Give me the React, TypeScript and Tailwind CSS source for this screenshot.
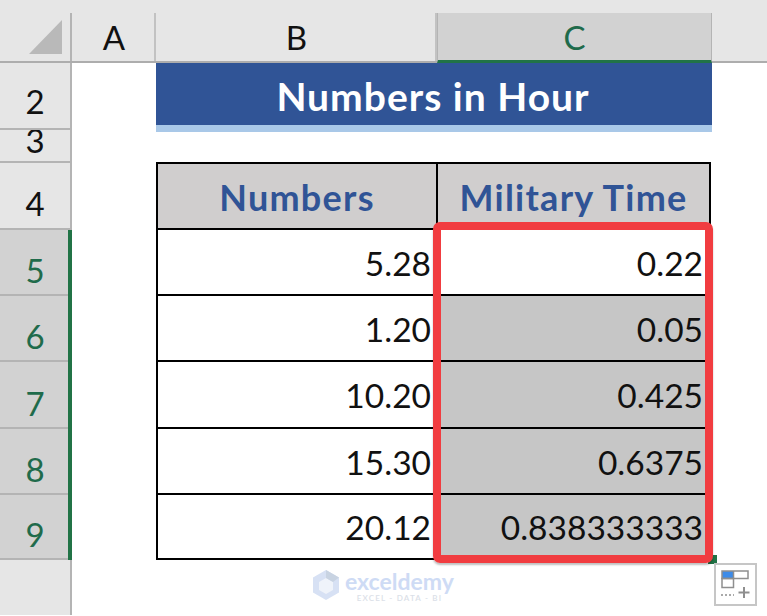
const rows = [
  { n: "5", h: "h-[66px]", cell: "h-[66px]", a: "5.28", b: "0.22", white: true },
  { n: "6", h: "h-[66px]", cell: "h-[66px]", a: "1.20", b: "0.05" },
  { n: "7", h: "h-[67px]", cell: "h-[67px]", a: "10.20", b: "0.425" },
  { n: "8", h: "h-[66px]", cell: "h-[66px]", a: "15.30", b: "0.6375" },
  { n: "9", h: "h-[65px]", cell: "h-[65px]", a: "20.12", b: "0.838333333" },
];

function RowHead({ n, h, pb, active }: { n: string; h: string; pb: string; active?: boolean }) {
  return (
    <div
      className={`${h} ${pb} flex items-end justify-center text-[33px] leading-[40px] border-b-[2px] border-[#b4b4b4] ${
        active ? "bg-[#d2d2d2] text-[#1f6b4b] pl-[2px]" : "bg-[#e6e6e6] text-[#111]"
      }`}
    >
      {n}
    </div>
  );
}

export default function App() {
  return (
    <div className="relative w-[767px] h-[616px] overflow-hidden bg-white font-['Lato','Open_Sans','Liberation_Sans',sans-serif]">
      <div className="h-[13px] bg-[#e6e6e6]" />
      <div className="flex h-[50px] bg-[#e6e6e6] border-b-[2px] border-[#adadad]">
        <div className="w-[72px] shrink-0 border-r-[2px] border-[#b4b4b4] flex items-end justify-end pr-[7px] pb-[7px]">
          <svg width="34" height="34" viewBox="0 0 34 34">
            <path d="M33 0V34H0Z" fill="#b9b9b9" />
          </svg>
        </div>
        <div className="w-[84px] shrink-0 border-r-[2px] border-[#c2c2c2] flex items-center justify-center pl-[2px] text-[33px] text-[#111] leading-[48px]">
          A
        </div>
        <div className="w-[281px] shrink-0 border-r-[2px] border-[#c2c2c2] flex items-center justify-center pl-[2px] text-[33px] text-[#111] leading-[48px]">
          B
        </div>
        <div className="w-[275px] -mb-[2px] shrink-0 bg-[#d2d2d2] border-x border-x-[#b4b4b4] border-b-[3px] border-b-[#217346] flex items-center justify-center text-[33px] text-[#1f6b4b] leading-[48px]">
          C
        </div>
      </div>
      <div className="flex">
        <div className="flex flex-col w-[72px] shrink-0">
          <div className="border-r-[2px] border-[#b4b4b4]">
            <RowHead n="2" h="h-[67px]" pb="pb-[7px]" />
            <div className="h-[33px] pb-[4px] bg-[#e6e6e6] border-b-[2px] border-[#b4b4b4] overflow-hidden flex items-end justify-center text-[33px] leading-[34px] text-[#111]">
              3
            </div>
            <RowHead n="4" h="h-[67px]" pb="pb-[5px]" />
          </div>
          <div className="border-r-[4px] border-[#217346]">
            {rows.map((r) => (
              <RowHead key={r.n} n={r.n} h={r.h} pb="pb-[4px]" active />
            ))}
          </div>
          <div className="h-[55px] bg-[#e6e6e6] border-r-[2px] border-[#b4b4b4]" />
        </div>
        <div className="ml-[84px] w-[556px]">
          <div className="flex flex-col">
            <div className="h-[62px] pr-[2px] bg-[#305496] text-white text-center font-bold text-[39px] tracking-[1px] leading-[66px]">
              Numbers in Hour
            </div>
            <div className="h-[7px] bg-[#a9c8e8]" />
          </div>
          <div className="h-[30px]" />
          <div className="w-[555px] border-[2px] border-black text-[#111] text-[33.500px]">
            <div className="flex h-[64px] bg-[#d0cece] text-[#305496] font-bold text-[36px] tracking-[1.250px]">
              <div className="w-[280px] border-r-[2px] border-black flex items-center justify-center pt-[2px]">Numbers</div>
              <div className="flex-1 flex items-center justify-center pt-[2px]">Military Time</div>
            </div>
            {rows.map((r) => (
              <div key={r.n} className={`flex ${r.cell} border-t-[2px] border-black`}>
                <div className="w-[280px] border-r-[2px] border-black flex items-center justify-end pr-[5px] pt-[2px]">{r.a}</div>
                <div className={`flex-1 flex items-center justify-end pr-[6px] pt-[2px] ${r.white ? "bg-white" : "bg-[#c6c6c6]"}`}>{r.b}</div>
              </div>
            ))}
          </div>
        </div>
      </div>

      <div className="absolute left-[708px] top-[555px] w-[9px] h-[9px] bg-[#217346]" />
      <div className="absolute left-[433px] top-[222px] w-[280px] h-[341px] rounded-[7px] border-[8px] border-[#f13c40] shadow-[0_2px_2px_rgba(0,0,0,0.25)]" />

      <div className="absolute left-[312px] top-[569px] flex items-start gap-[5px] opacity-90">
        <svg width="28" height="32" viewBox="0 0 28 32">
          <path d="M14 1L27 8.500V23.500L14 31L1 23.500V8.500Z" fill="#d3def3" />
          <path d="M14 9L21 13V21L14 25L7 21V13Z" fill="#eef2fa" />
          <path d="M14 1L27 8.500L21 13L14 9Z" fill="#c3cfdf" />
        </svg>
        <div className="flex flex-col items-center">
          <span className="text-[#c9d8f4] font-bold text-[23px] leading-[20px] mt-[2px]">exceldemy</span>
          <span className="text-[#d8dde6] text-[8px] font-semibold leading-[9px] tracking-[1.200px] mt-[3px]">EXCEL - DATA - BI</span>
        </div>
      </div>

      <div className="absolute left-[714px] top-[563px] w-[43px] h-[43px] bg-white border-[2px] border-[#c6c6c6]">
        <svg width="39" height="39" viewBox="0 0 39 39" className="block">
          <rect x="6" y="6" width="11" height="7" fill="#3d8be8" />
          <rect x="6" y="6" width="26" height="7.500" fill="none" stroke="#8f8f8f" strokeWidth="1.500" />
          <path d="M17.500 13.500V6" stroke="#8f8f8f" strokeWidth="1.500" />
          <rect x="6" y="13.500" width="11.500" height="9" fill="none" stroke="#8f8f8f" strokeWidth="1.500" />
          <path d="M5 30H18" stroke="#8f8f8f" strokeWidth="1.500" strokeDasharray="2 2" />
          <path d="M28 22V33M22.500 27.500H33.500" stroke="#8f8f8f" strokeWidth="2" />
        </svg>
      </div>
    </div>
  );
}
